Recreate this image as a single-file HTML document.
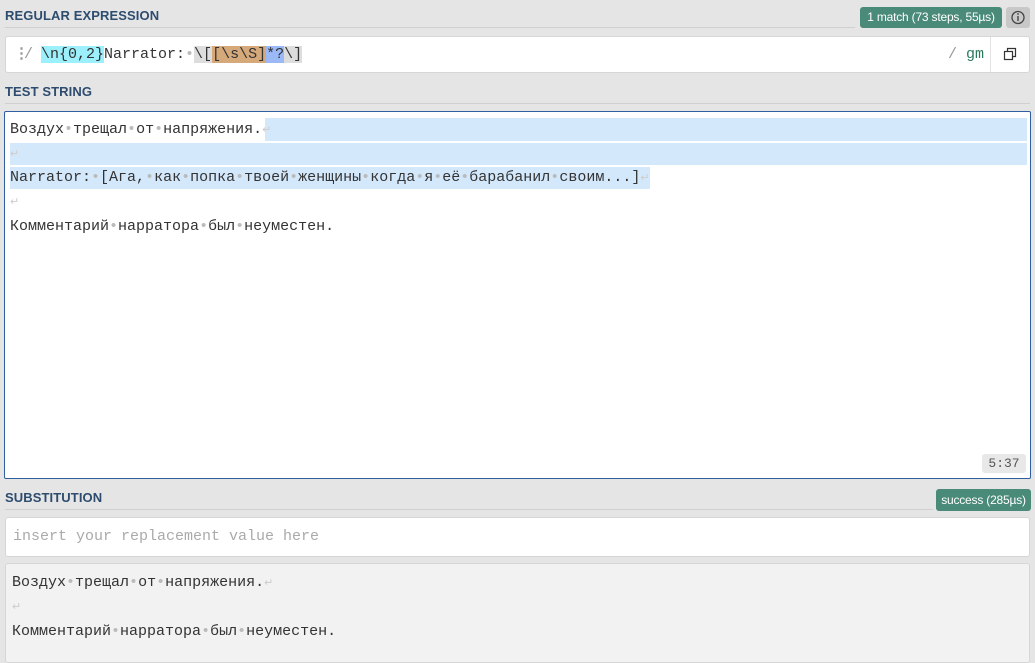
<!DOCTYPE html>
<html><head><meta charset="utf-8"><style>
*{box-sizing:border-box;margin:0;padding:0}
body{width:1035px;height:651px;background:#e5e5e5;font-family:"Liberation Sans",sans-serif;position:relative;overflow:hidden}
.h{position:absolute;left:5px;font-size:13px;font-weight:bold;color:#2d4c6e;letter-spacing:0.1px}
.ln{position:absolute;left:5px;height:1px;background:#d0d0d0}
.box{position:absolute;background:#fff;border:1px solid #d6d6d6;border-radius:3px}
.m{font-family:"Liberation Mono",monospace;font-size:15px;color:#333;white-space:pre}
.d{color:#bbb}
.r{color:#ccc;font-size:11px}
.badge{position:absolute;background:#4a8a78;color:#fff;font-size:12px;border-radius:3px;text-align:center;letter-spacing:-0.2px}
.row{position:absolute;left:10px;height:24px;line-height:24px}
</style></head><body>
<div class="h" style="top:8px">REGULAR EXPRESSION</div>
<div class="ln" style="top:27px;width:850px"></div>
<div class="badge" style="left:860px;top:7px;width:142px;height:21px;line-height:21px">1 match (73 steps, 55µs)</div>
<div style="position:absolute;left:1006px;top:7px;width:24px;height:21px;background:#c8c8c8;border-radius:3px"><svg width="24" height="21"><circle cx="12" cy="10.5" r="6" fill="none" stroke="#444" stroke-width="1.3"/><line x1="12" y1="9" x2="12" y2="14" stroke="#444" stroke-width="1.4"/><circle cx="12" cy="7" r="0.9" fill="#444"/></svg></div>
<div class="box" style="left:5px;top:36px;width:1025px;height:37px">
 <div class="m" style="position:absolute;left:8px;top:8px;line-height:20px;color:#999;font-weight:bold">⋮</div>
 <div class="m" style="position:absolute;left:18px;top:8px;line-height:20px"><span style="color:#999">/</span></div>
 <div class="m" style="position:absolute;left:35px;top:8px;line-height:20px"><span style="background:#9cf0fb">\n{0,2}</span>Narrator:<span class="d">•</span><span style="background:#ddd">\[</span><span style="background:#d6a97a">[\s\S]</span><span style="background:#9bb9f7">*?</span><span style="background:#ddd">\]</span></div>
 <div class="m" style="position:absolute;left:942px;top:8px;line-height:20px"><span style="color:#999">/</span> <span style="color:#2a7a5a">gm</span></div>
 <div style="position:absolute;left:984px;top:0;width:1px;height:35px;background:#e2e2e2"></div>
 <svg style="position:absolute;left:997px;top:10px" width="14" height="14"><rect x="1.5" y="4.5" width="8" height="8" fill="#fff" stroke="#333" stroke-width="1.2"/><path d="M4.5 4.5V1.5H12.5V9.5H9.5" fill="none" stroke="#333" stroke-width="1.2"/></svg>
</div>
<div class="h" style="top:84px">TEST STRING</div>
<div class="ln" style="top:103px;width:1025px"></div>
<div class="box" style="left:4px;top:111px;width:1027px;height:368px;border:1px solid #2f5f9e;border-radius:2px">
 <div style="position:absolute;left:260px;top:6px;width:762px;height:23px;background:#d4e8fc"></div>
 <div style="position:absolute;left:5px;top:31px;width:1017px;height:22px;background:#d4e8fc"></div>
 <div style="position:absolute;left:5px;top:55px;width:640px;height:22px;background:#d4e8fc"></div>
 <div class="m row" style="left:5px;top:6px">Воздух<span class="d">•</span>трещал<span class="d">•</span>от<span class="d">•</span>напряжения.<span class="r">↵</span></div>
 <div class="m row" style="left:5px;top:30px"><span class="r">↵</span></div>
 <div class="m row" style="left:5px;top:54px">Narrator:<span class="d">•</span>[Ага,<span class="d">•</span>как<span class="d">•</span>попка<span class="d">•</span>твоей<span class="d">•</span>женщины<span class="d">•</span>когда<span class="d">•</span>я<span class="d">•</span>её<span class="d">•</span>барабанил<span class="d">•</span>своим...]<span class="r">↵</span></div>
 <div class="m row" style="left:5px;top:78px"><span class="r">↵</span></div>
 <div class="m row" style="left:5px;top:103px">Комментарий<span class="d">•</span>нарратора<span class="d">•</span>был<span class="d">•</span>неуместен.</div>
 <div class="m" style="position:absolute;left:977px;top:342px;width:44px;height:19px;background:#e8e8e8;border-radius:3px;font-size:13px;line-height:19px;text-align:center;color:#555">5:37</div>
</div>
<div class="h" style="top:490px">SUBSTITUTION</div>
<div class="ln" style="top:509px;width:928px"></div>
<div class="badge" style="left:936px;top:489px;width:95px;height:22px;line-height:22px">success (285µs)</div>
<div class="box" style="left:5px;top:517px;width:1025px;height:40px">
 <div class="m" style="position:absolute;left:7px;top:9px;line-height:20px;color:#aaa">insert your replacement value here</div>
</div>
<div class="box" style="left:5px;top:563px;width:1025px;height:100px;background:#f2f2f2">
 <div class="m row" style="left:6px;top:7px">Воздух<span class="d">•</span>трещал<span class="d">•</span>от<span class="d">•</span>напряжения.<span class="r">↵</span></div>
 <div class="m row" style="left:6px;top:31px"><span class="r">↵</span></div>
 <div class="m row" style="left:6px;top:56px">Комментарий<span class="d">•</span>нарратора<span class="d">•</span>был<span class="d">•</span>неуместен.</div>
</div>
</body></html>
